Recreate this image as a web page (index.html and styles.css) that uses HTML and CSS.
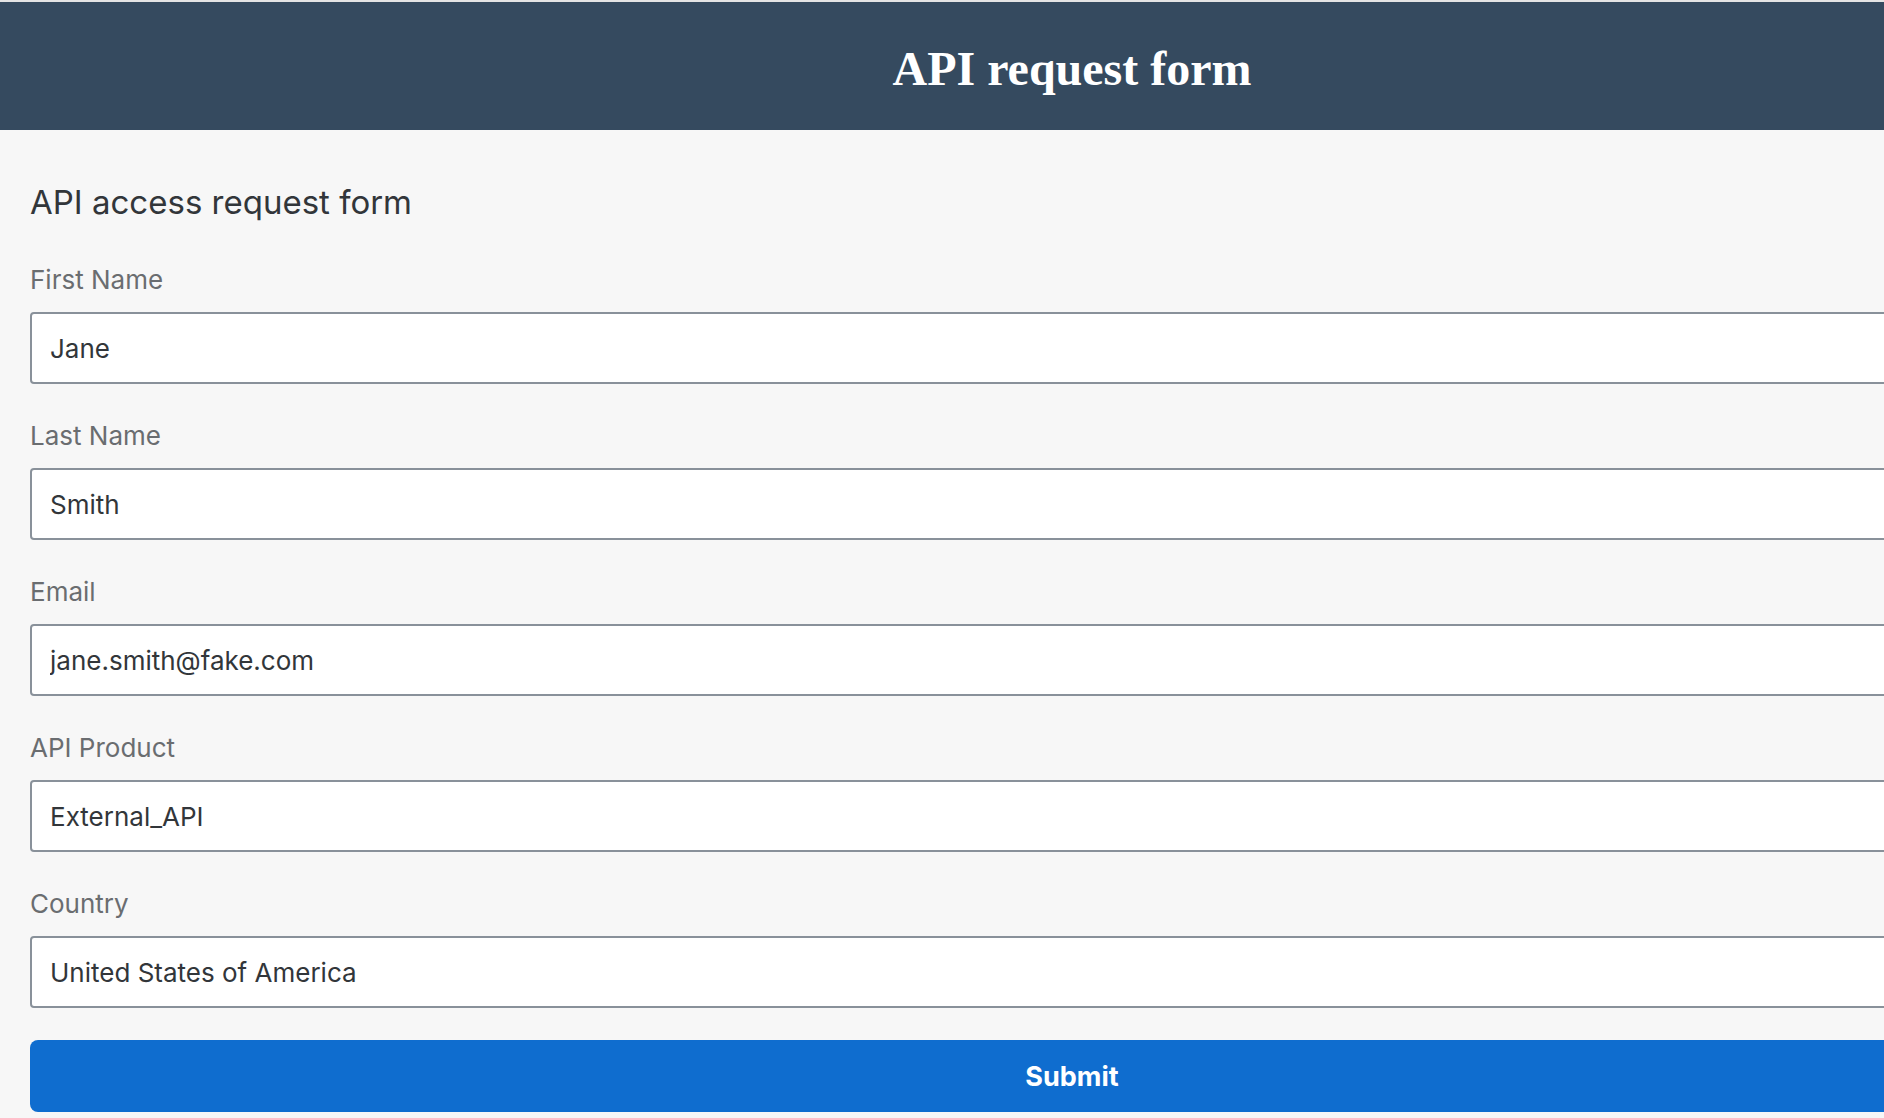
FILE: index.html
```html
<!DOCTYPE html>
<html lang="en">
<head>
<meta charset="utf-8">
<title>API request form</title>
<link rel="stylesheet" href="styles.css">
</head>
<body>
<div class="page">
  <div class="topline"></div>
  <header class="shell">
    <h1 class="shell-title">API request form</h1>
  </header>
  <main class="content">
    <h2 class="form-title">API access request form</h2>
    <form class="form">
      <div class="field">
        <label class="field-label" for="fn">First Name</label>
        <input class="field-input" id="fn" type="text" value="Jane" readonly>
      </div>
      <div class="field">
        <label class="field-label" for="ln">Last Name</label>
        <input class="field-input" id="ln" type="text" value="Smith" readonly>
      </div>
      <div class="field">
        <label class="field-label" for="em">Email</label>
        <input class="field-input" id="em" type="text" value="jane.smith@fake.com" readonly>
      </div>
      <div class="field">
        <label class="field-label" for="ap">API Product</label>
        <input class="field-input" id="ap" type="text" value="External_API" readonly>
      </div>
      <div class="field">
        <label class="field-label" for="co">Country</label>
        <input class="field-input" id="co" type="text" value="United States of America" readonly>
      </div>
      <button class="submit" type="button">Submit</button>
    </form>
  </main>
</div>
</body>
</html>
```

FILE: styles.css
```css
html, body {
  margin: 0;
  padding: 0;
  background: #f7f7f7;
  overflow: hidden;
}

.page {
  width: 2144px;
  min-height: 1118px;
  background: #f7f7f7;
  font-family: Inter, "Noto Sans", sans-serif;
}

.topline {
  height: 2px;
  background: #e4e4e4;
}

.shell {
  box-sizing: border-box;
  height: 128px;
  padding-top: 5px;
  background: #354a5f;
  display: flex;
  align-items: center;
  justify-content: center;
}

.shell-title {
  margin: 0;
  font-family: "Liberation Serif", serif;
  font-weight: bold;
  font-size: 48px;
  line-height: 56px;
  color: #ffffff;
}

.content {
  padding: 0 30px;
}

.form-title {
  margin: 53px 0 43px;
  font-size: 33px;
  line-height: 38px;
  font-weight: 400;
  color: #32363a;
}

.form {
  display: flex;
  flex-direction: column;
  gap: 36px;
}

.field {
  display: flex;
  flex-direction: column;
  gap: 16px;
}

.field-label {
  font-size: 26px;
  line-height: 32px;
  color: #6a6d70;
}

.field-input {
  box-sizing: border-box;
  height: 72px;
  width: 100%;
  margin: 0;
  padding: 0 18px;
  border: 2px solid #89919a;
  border-radius: 4px;
  background: #ffffff;
  font-family: Inter, "Noto Sans", sans-serif;
  font-size: 26px;
  color: #32363a;
  outline: none;
}

.submit {
  margin-top: -4px;
  height: 72px;
  width: 100%;
  border: none;
  border-radius: 8px;
  background: #0f6dcf;
  color: #ffffff;
  font-family: Inter, "Noto Sans", sans-serif;
  font-weight: bold;
  font-size: 27px;
}
```
